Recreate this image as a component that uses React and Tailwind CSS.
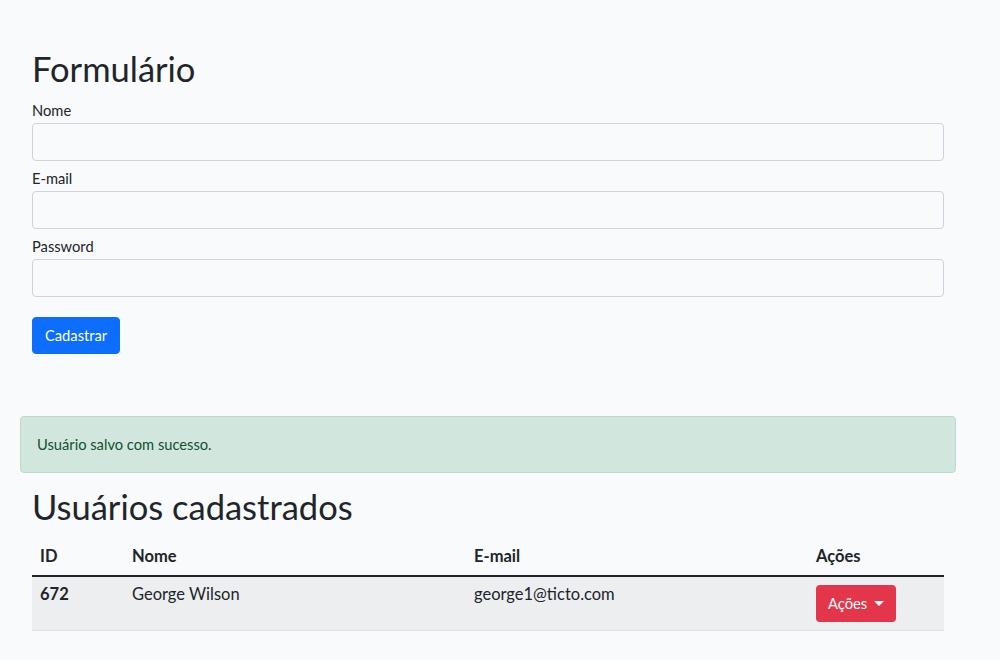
export default function App() {
  return (
    <div className="min-h-screen bg-[#f8fafc] text-[#212529] font-['Lato','Noto_Sans',sans-serif] text-[14.7px] leading-[23px]">
      <div className="w-[960px] mx-auto px-3 pt-[47px]">
        {/* Form */}
        <div className="w-[912px]">
          <h1 className="text-[34.5px] leading-[44px] font-normal mb-2">Formulário</h1>
          <form onSubmit={(e) => e.preventDefault()}>
            <div className="mb-[6px]">
              <label className="block mb-[1px]">Nome</label>
              <input type="text" className="block w-full h-[38px] px-3 bg-[#f8fafc] border border-[#ced4da] rounded-[4px]" />
            </div>
            <div className="mb-[6px]">
              <label className="block mb-[1px]">E-mail</label>
              <input type="email" className="block w-full h-[38px] px-3 bg-[#f8fafc] border border-[#ced4da] rounded-[4px]" />
            </div>
            <div className="mb-[5px]">
              <label className="block mb-[1px]">Password</label>
              <input type="password" className="block w-full h-[38px] px-3 bg-[#f8fafc] border border-[#ced4da] rounded-[4px]" />
            </div>
            <button type="submit" className="mt-[15px] h-[37px] px-3 bg-[#0d6efd] text-white rounded-[4px] border border-[#0d6efd]">
              Cadastrar
            </button>
          </form>
        </div>

        {/* Alert */}
        <div className="-mx-3 w-[936px] mt-[62px] h-[57px] px-4 pt-4 bg-[#d1e7dd] border border-[#badbcc] text-[#0f5132] rounded-[4px]">
          Usuário salvo com sucesso.
        </div>

        {/* Users */}
        <div className="w-[912px]">
          <h1 className="text-[34.5px] leading-[44px] font-normal mt-3 mb-2">Usuários cadastrados</h1>
          <table className="w-full border-collapse text-left text-[16.5px]">
            <thead>
              <tr className="border-b-2 border-[#212529]">
                <th className="w-[92px] px-2 pt-2 pb-[7px] font-bold">ID</th>
                <th className="w-[342px] px-2 pt-2 pb-[7px] font-bold">Nome</th>
                <th className="w-[342px] px-2 pt-2 pb-[7px] font-bold">E-mail</th>
                <th className="px-2 pt-2 pb-[7px] font-bold">Ações</th>
              </tr>
            </thead>
            <tbody>
              <tr className="bg-[#eceef0] border-b border-[#dee2e6] align-top">
                <td className="px-2 pt-[6px] font-bold">672</td>
                <td className="px-2 pt-[6px]">George Wilson</td>
                <td className="px-2 pt-[6px]">george1@ticto.com</td>
                <td className="p-2">
                  <button className="h-[37px] px-3 bg-[#e3364b] text-white text-[14.7px] rounded-[4px] flex items-center gap-[7px]">
                    Ações
                    <span className="w-0 h-0 border-l-[5px] border-r-[5px] border-t-[5px] border-l-transparent border-r-transparent border-t-white" />
                  </button>
                </td>
              </tr>
            </tbody>
          </table>
        </div>
      </div>
    </div>
  );
}
